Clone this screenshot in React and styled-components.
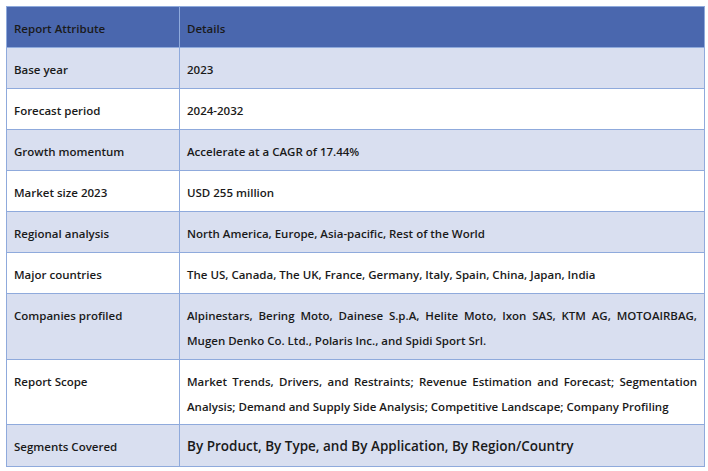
import styled, { createGlobalStyle } from "styled-components";

const Global = createGlobalStyle`
  body { margin: 0; background: #fff; font-family: "Open Sans", "Liberation Sans", sans-serif; }
`;

const Wrap = styled.div`
  padding: 6px 0 0 6px;
`;

const Table = styled.table`
  width: 699px;
  border-collapse: collapse;
  table-layout: fixed;
  color: #1a1a1a;
  font-weight: 600;
  font-size: 11.5px;
`;

const Row = styled.tr`
  height: ${(p) => p.$h}px;
  background: ${(p) => (p.$head ? "#4a67ae" : p.$alt ? "#d9dff0" : "#fff")};
`;

const Cell = styled.td`
  border: 1px solid #8faadc;
  padding: 9px 7px 0 7px;
  vertical-align: top;
  line-height: 25px;
  text-align: justify;
  font-size: ${(p) => (p.$big ? "13.5px" : "inherit")};
`;

const rows = [
  ["Base year", "2023"],
  ["Forecast period", "2024-2032"],
  ["Growth momentum", "Accelerate at a CAGR of 17.44%"],
  ["Market size 2023", "USD 255 million"],
  ["Regional analysis", "North America, Europe, Asia-pacific, Rest of the World"],
  ["Major countries", "The US, Canada, The UK, France, Germany, Italy, Spain, China, Japan, India"],
  ["Companies profiled", "Alpinestars, Bering Moto, Dainese S.p.A, Helite Moto, Ixon SAS, KTM AG, MOTOAIRBAG, Mugen Denko Co. Ltd., Polaris Inc., and Spidi Sport Srl.", 66],
  ["Report Scope", "Market Trends, Drivers, and Restraints; Revenue Estimation and Forecast; Segmentation Analysis; Demand and Supply Side Analysis; Competitive Landscape; Company Profiling", 65],
  ["Segments Covered", "By Product, By Type, and By Application, By Region/Country", 42, true],
];

export default function App() {
  return (
    <Wrap>
      <Global />
      <Table>
        <colgroup>
          <col style={{ width: 173 }} />
          <col />
        </colgroup>
        <tbody>
          <Row $head $h={41}>
            <Cell>Report Attribute</Cell>
            <Cell>Details</Cell>
          </Row>
          {rows.map(([a, b, h, big], i) => (
            <Row key={a} $alt={i % 2 === 0} $h={h || 41}>
              <Cell>{a}</Cell>
              <Cell $big={big}>{b}</Cell>
            </Row>
          ))}
        </tbody>
      </Table>
    </Wrap>
  );
}
